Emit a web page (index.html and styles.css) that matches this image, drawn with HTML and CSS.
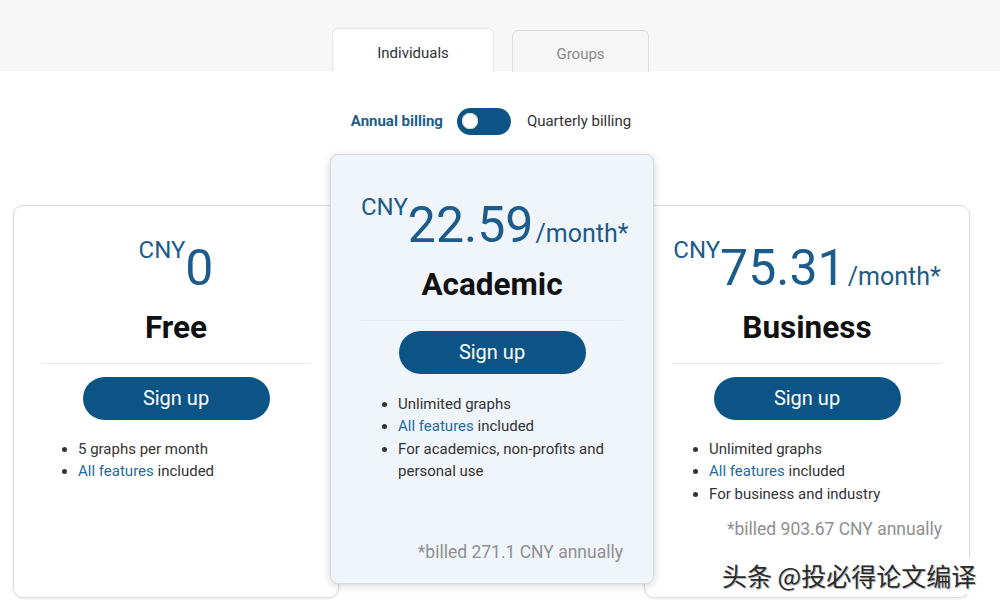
FILE: index.html
```html
<!DOCTYPE html>
<html lang="en">
<head>
<meta charset="utf-8">
<title>Pricing</title>
<link rel="stylesheet" href="styles.css">
</head>
<body>
<header class="topbar">
  <nav class="tabs">
    <div class="tab tab--active">Individuals</div>
    <div class="tab">Groups</div>
  </nav>
</header>

<div class="billing">
  <span class="billing__label billing__label--on">Annual billing</span>
  <span class="switch"><span class="switch__knob"></span></span>
  <span class="billing__label">Quarterly billing</span>
</div>

<main class="plans">
  <section class="card">
    <div class="price"><span class="price__cur">CNY</span><span class="price__num">0</span></div>
    <h2 class="card__title">Free</h2>
    <hr class="card__rule">
    <div class="card__action"><a class="btn">Sign up</a></div>
    <ul class="features">
      <li>5 graphs per month</li>
      <li><a class="link">All features</a> included</li>
    </ul>
  </section>

  <section class="card card--featured">
    <div class="price"><span class="price__cur">CNY</span><span class="price__num">22.59</span><span class="price__per">/month*</span></div>
    <h2 class="card__title">Academic</h2>
    <hr class="card__rule">
    <div class="card__action"><a class="btn">Sign up</a></div>
    <ul class="features">
      <li>Unlimited graphs</li>
      <li><a class="link">All features</a> included</li>
      <li>For academics, non-profits and personal use</li>
    </ul>
    <p class="note">*billed 271.1 CNY annually</p>
  </section>

  <section class="card card--last">
    <div class="price"><span class="price__cur">CNY</span><span class="price__num">75.31</span><span class="price__per">/month*</span></div>
    <h2 class="card__title">Business</h2>
    <hr class="card__rule">
    <div class="card__action"><a class="btn">Sign up</a></div>
    <ul class="features">
      <li>Unlimited graphs</li>
      <li><a class="link">All features</a> included</li>
      <li>For business and industry</li>
    </ul>
    <p class="note">*billed 903.67 CNY annually</p>
  </section>
</main>

<div class="watermark">头条 @投必得论文编译</div>
</body>
</html>
```

FILE: styles.css
```css
* { box-sizing: border-box; }

html, body {
  margin: 0;
  padding: 0;
  background: #ffffff;
  font-family: Roboto, "Noto Sans", "Liberation Sans", sans-serif;
  color: #333;
  width: 1000px;
  height: 607px;
  overflow: hidden;
}

.topbar {
  height: 71px;
  background: #f7f7f7;
  display: flex;
  justify-content: center;
  align-items: flex-end;
  padding-right: 19px;
}

.tabs {
  display: flex;
  align-items: flex-end;
  gap: 18px;
  margin-bottom: -1px;
}

.tab {
  width: 137px;
  height: 42px;
  display: flex;
  align-items: center;
  justify-content: center;
  font-size: 15px;
  color: #8a8a8a;
  background: #f6f6f6;
  border: 1px solid #dedede;
  border-bottom: none;
  border-radius: 6px 6px 0 0;
  padding-top: 4px;
}

.tab--active {
  width: 162px;
  height: 44px;
  background: #ffffff;
  color: #333;
  border-color: #e6e6e6;
  padding-top: 4px;
}

.billing {
  display: flex;
  justify-content: center;
  align-items: center;
  gap: 14px;
  margin-top: 36px;
  height: 28px;
  padding-right: 18px;
}

.billing__label {
  font-size: 15px;
  color: #333;
}

.billing__label--on {
  color: #1d5c8c;
  font-weight: 700;
}

.switch {
  width: 54px;
  height: 27px;
  border-radius: 14px;
  background: #0c5486;
  display: flex;
  align-items: center;
  padding-left: 5px;
  margin-right: 2px;
}

.switch__knob {
  width: 16px;
  height: 16px;
  border-radius: 50%;
  background: #ffffff;
  box-shadow: inset 0 0 0 1px #d8d8d8;
}

.plans {
  display: flex;
  align-items: flex-start;
  padding-left: 13px;
  margin-top: 19px;
}

.card {
  width: 326px;
  height: 393px;
  margin-top: 51px;
  background: #ffffff;
  border: 1px solid #dcdcdc;
  border-radius: 10px;
  box-shadow: 0 1px 3px rgba(0, 0, 0, 0.08);
  padding: 32px 27px 20px;
  display: flex;
  flex-direction: column;
}

.card--featured {
  position: relative;
  z-index: 2;
  width: 324px;
  height: 430px;
  margin-top: 0;
  margin-left: -9px;
  background: #eff5fb;
  border-color: #d6d9dd;
  border-radius: 8px;
  box-shadow: 0 2px 8px rgba(0, 0, 0, 0.16);
  padding: 40px 30px 20px;
}

.card--last {
  margin-left: -10px;
}

.price {
  height: 60px;
  line-height: 60px;
  font-size: 50px;
  color: #1b5c8d;
  text-align: center;
  white-space: nowrap;
}

.price__cur {
  font-size: 24px;
  line-height: 1;
  vertical-align: top;
}

.price__per {
  font-size: 25px;
  margin-left: 2px;
  color: #1f5a86;
}

.card__title {
  margin: 12px 0 0;
  height: 36px;
  line-height: 36px;
  text-align: center;
  font-size: 31.5px;
  font-weight: 700;
  color: #111;
}

.card__rule {
  margin: 17px 0 0;
  border: none;
  border-top: 1px solid #e6e8ea;
  height: 0;
}

.card__action {
  display: flex;
  justify-content: center;
  margin-top: 13px;
}

.card--featured .card__action {
  margin-top: 10px;
}

.btn {
  width: 187px;
  height: 43px;
  border-radius: 22px;
  background: #0c5486;
  color: #ffffff;
  font-size: 20px;
  display: flex;
  align-items: center;
  justify-content: center;
  padding-bottom: 2px;
}

.features {
  margin: 18px 0 0;
  padding-left: 37px;
  font-size: 15px;
  line-height: 22.4px;
  color: #333;
}

.card--featured .features {
  margin-top: 19px;
}

.link {
  color: #1f6aa5;
}

.note {
  margin: 13px 0 0;
  text-align: right;
  font-size: 17.5px;
  line-height: 22px;
  color: #8f8f8f;
}

.card--featured .note {
  margin-top: auto;
}

.watermark {
  position: absolute;
  left: 719px;
  top: 558px;
  padding: 0 18px 2px 3px;
  background: #ffffff;
  font-family: "Noto Sans CJK SC", sans-serif;
  font-size: 25px;
  line-height: 34px;
  color: #2a2a2a;
  text-shadow: 1px 1px 0 #bdbdbd;
}
```
